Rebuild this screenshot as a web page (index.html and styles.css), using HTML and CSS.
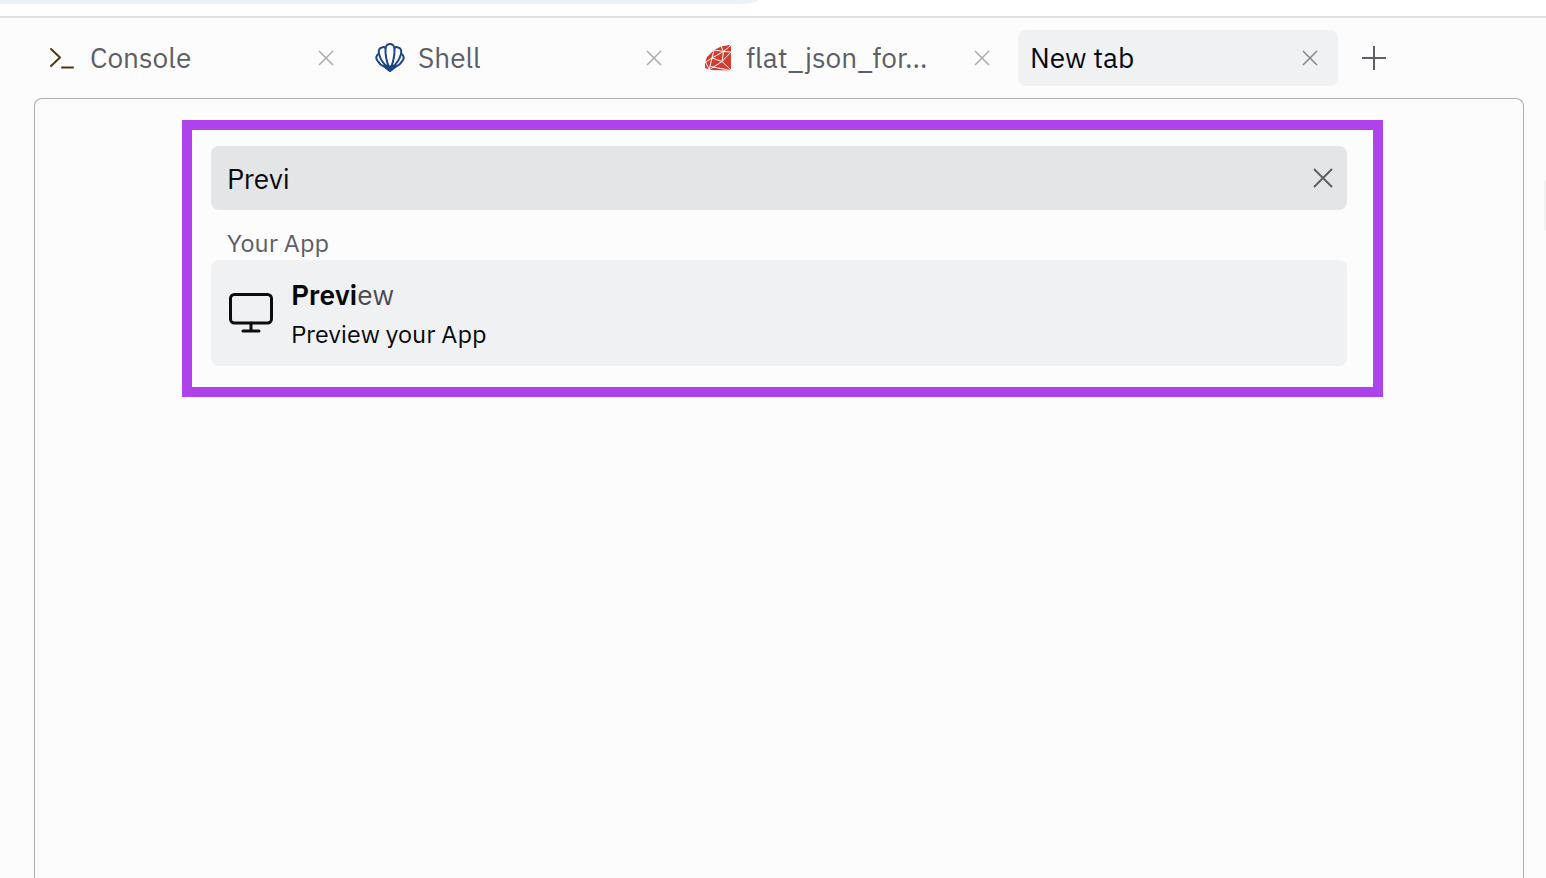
FILE: index.html
```html
<!DOCTYPE html>
<html lang="en">
<head>
<meta charset="utf-8">
<meta name="viewport" content="width=device-width, initial-scale=1">
<title>New tab</title>
<link rel="stylesheet" href="styles.css">
</head>
<body>
<div class="browser-bar"><div class="address-edge"></div></div>
<nav class="tabs" aria-label="Open tabs">
  <div class="tab">
    <button class="tab-name">
      <svg class="tab-icon" viewBox="0 0 32 32" fill="none" stroke="#4c3b08" stroke-width="2" stroke-linecap="round" stroke-linejoin="round"><path d="M5 7l9 8.500-9 8.500M16 25.500h11"/></svg>
      <span class="label">Console</span>
    </button>
    <button class="close" aria-label="Close Console"><svg viewBox="0 0 16 16"><path d="M1 1l14 14M15 1L1 15"/></svg></button>
  </div>
  <div class="tab">
    <button class="tab-name">
      <svg class="tab-icon" viewBox="0 0 32 32" fill="none" stroke="#1b4586" stroke-width="2" stroke-linejoin="round"><path d="M16 29L10 24.500Q6 23 4.500 20Q1 16.500 3 13.500Q3.500 12 5 12Q4 6 8 5.500Q10 4.500 11.500 6Q12.500 2 16 2Q19.500 2 20.500 6Q22 4.500 24 5.500Q28 6 27 12Q28.500 12 29 13.500Q31 16.500 27.500 20Q26 23 22 24.500Z"/><path d="M15 27Q7 20 5 12M15.500 27Q11 16 11.500 6M16.500 27Q21 16 20.500 6M17 27Q25 20 27 12"/><path d="M10 24l4-.5 2 1.500 2-1.500 4 .5-6 5z" fill="#1b4586"/></svg>
      <span class="label">Shell</span>
    </button>
    <button class="close" aria-label="Close Shell"><svg viewBox="0 0 16 16"><path d="M1 1l14 14M15 1L1 15"/></svg></button>
  </div>
  <div class="tab">
    <button class="tab-name">
      <svg class="tab-icon" viewBox="0 0 32 32"><path fill="#d63b30" d="M3 20.500L5 15 12 8 19 4.500 27 3 29 4.500V28.500L8 28 3 26z"/><path fill="none" stroke="#fff" stroke-width="1" d="M12 8l-2 8-7 4.500M12 8l9.500 1.500L28 4M19 4l2.500 5.500 7.500.5M21.500 9.500L10 16l10 3.500 1.500-10M20 19.500L29 10M20 19.500L29 28M10 16L7 28l13-8.500M3.500 20l4 8M8.500 24.500l20.500 4"/></svg>
      <span class="label">flat_json_for…</span>
    </button>
    <button class="close" aria-label="Close flat_json_for…"><svg viewBox="0 0 16 16"><path d="M1 1l14 14M15 1L1 15"/></svg></button>
  </div>
  <div class="tab active">
    <button class="tab-name" aria-current="page"><span class="label">New tab</span></button>
    <button class="close" aria-label="Close New tab"><svg viewBox="0 0 16 16"><path d="M1 1l14 14M15 1L1 15"/></svg></button>
  </div>
  <button class="add" aria-label="Add tab"><svg viewBox="0 0 24 24"><path d="M12 0v24M0 12h24"/></svg></button>
</nav>
<main class="pane">
  <section class="finder">
    <div class="search">
      <input class="search-input" type="text" value="Previ" aria-label="Search tools and files">
      <button class="clear" aria-label="Clear search"><svg viewBox="0 0 20 20"><path d="M1 1l18 18M19 1L1 19"/></svg></button>
    </div>
    <h2 class="group">Your App</h2>
    <button class="result">
      <svg class="monitor" viewBox="0 0 48 48" fill="none" stroke="#0b0d10" stroke-width="3" stroke-linecap="round"><rect x="3.500" y="5.500" width="41" height="28.500" rx="4"/><path d="M24 34v8M16 42h16"/></svg>
      <span class="result-text">
        <span class="result-title"><b>Previ</b>ew</span>
        <span class="result-note">Preview your App</span>
      </span>
    </button>
    <div class="highlight"></div>
  </section>
</main>
<div class="side-handle"></div>
</body>
</html>
```
FILE: styles.css
```css
* { box-sizing: border-box; }
body {
  margin: 0;
  min-height: 100vh;
  display: flex;
  flex-direction: column;
  background: #fcfcfc;
  color: #07090d;
  font-family: "IBM Plex Sans", Roboto, sans-serif;
  font-size: 28px;
}
button, input {
  margin: 0;
  padding: 0;
  border: 0;
  background: none;
  color: inherit;
  font: inherit;
  text-align: left;
}
svg { display: block; flex: none; }
.browser-bar {
  height: 18px;
  background: #fff;
  border-bottom: 2px solid #e0e0e1;
}
.address-edge {
  width: 49%;
  height: 4px;
  background: #edf2fa;
  border-bottom-right-radius: 20px 4px;
}
.tabs {
  display: flex;
  gap: 8px;
  padding: 12px 22px 12px 34px;
}
.tab {
  display: flex;
  align-items: center;
  flex: 0 1 320px;
  min-width: 0;
  height: 56px;
  padding: 0 20px 0 12px;
  border-radius: 8px;
  color: #5c5f66;
}
.tab.active { background: #f0f1f3; color: #07090d; }
.tab-name {
  display: flex;
  align-items: center;
  flex: 1;
  gap: 12px;
  min-width: 0;
}
.tab-icon { width: 32px; height: 32px; }
.label { line-height: 36px; white-space: nowrap; }
.close svg {
  width: 16px;
  height: 16px;
  fill: none;
  stroke: #a9abae;
  stroke-width: 1.500;
}
.active .close svg { stroke: #85878b; }
.add {
  display: flex;
  align-items: center;
  justify-content: center;
  width: 56px;
}
.add svg {
  width: 24px;
  height: 24px;
  stroke: #5c5f66;
  stroke-width: 2;
}
.pane {
  flex: 1;
  margin: 0 22px 0 34px;
  padding: 47px 36px 0;
  border: 1px solid #adaeb0;
  border-bottom: 0;
  border-radius: 8px 8px 0 0;
}
.finder {
  position: relative;
  max-width: 1136px;
  margin: 0 auto;
}
.search {
  display: flex;
  align-items: center;
  height: 64px;
  padding: 0 14px 0 16px;
  border-radius: 8px;
  background: #e4e5e7;
}
.search-input { flex: 1; min-width: 0; height: 64px; outline: 0; }
.clear svg {
  width: 20px;
  height: 20px;
  stroke: #5c5f66;
  stroke-width: 2;
}
.group {
  margin: 16px 16px 0;
  color: #5c5f66;
  font-size: 25px;
  font-weight: 400;
  line-height: 34px;
}
.result {
  display: flex;
  align-items: center;
  gap: 16px;
  width: 100%;
  height: 106px;
  padding: 0 16px;
  border-radius: 8px;
  background: #f0f1f3;
}
.monitor { width: 48px; height: 48px; }
.result-text { display: flex; flex-direction: column; gap: 2px; padding-top: 2px; }
.result-title { color: #484a50; line-height: 38px; }
.result-title b { color: #07090d; font-weight: 600; }
.result-note { font-size: 25px; line-height: 36px; }
.highlight {
  position: absolute;
  inset: -26px -36px -31px -29px;
  border: 10px solid #ae42eb;
  pointer-events: none;
}
.side-handle {
  position: absolute;
  top: 180px;
  right: 0;
  width: 2px;
  height: 51px;
  border-radius: 4px 0 0 4px;
  background: #f2f2f3;
}
```
